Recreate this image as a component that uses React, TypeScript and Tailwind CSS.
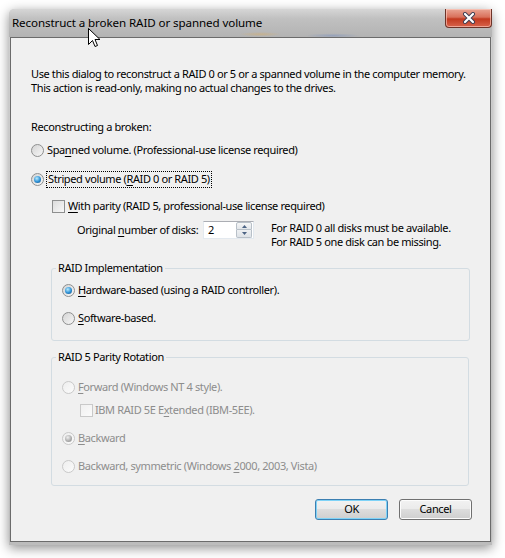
import React from 'react';

const Key = ({ children }: { children: React.ReactNode }) => (
  <span className="underline underline-offset-[2px] decoration-[1px]">{children}</span>
);

const Radio = ({ checked, disabled }: { checked?: boolean; disabled?: boolean }) => (
  <span
    className={`flex h-[13px] w-[13px] shrink-0 items-center justify-center rounded-full border ${
      disabled
        ? 'border-[#c9c9c9] bg-[linear-gradient(135deg,#eeeeee,#fbfbfb)]'
        : 'border-[#8e8f8f] bg-[linear-gradient(135deg,#d4d4d4,#f7f7f7)]'
    }`}
  >
    {checked && (
      <span
        className={`h-[7px] w-[7px] rounded-full ${
          disabled
            ? 'bg-[radial-gradient(circle_at_40%_35%,#f0f0f0,#a9a9a9_60%,#8c8c8c)]'
            : 'bg-[radial-gradient(circle_at_40%_35%,#b9ecff,#2b8fd4_55%,#15497a)]'
        }`}
      />
    )}
  </span>
);

const Check = ({ disabled }: { disabled?: boolean }) => (
  <span
    className={`h-[13px] w-[13px] shrink-0 border ${
      disabled
        ? 'border-[#c9c9c9] bg-[linear-gradient(135deg,#f0f0f0,#fbfbfb)]'
        : 'border-[#8e8f8f] bg-[linear-gradient(135deg,#dcdcdc,#f8f8f8)]'
    }`}
  />
);

const Row = ({ className, children }: { className: string; children: React.ReactNode }) => (
  <div className={`flex h-[16px] items-center whitespace-nowrap ${className}`}>{children}</div>
);

const Group = ({ title, className, children }: { title: string; className: string; children: React.ReactNode }) => (
  <div className={`ml-[40px] flex flex-col rounded-[3px] border border-[#d3dce2] ${className}`}>
    <div className="-mt-[8px] ml-[4px] w-fit bg-[#f0f0f0] px-[2px] leading-[14px] text-black">{title}</div>
    {children}
  </div>
);

const Button = ({ label, primary }: { label: string; primary?: boolean }) => (
  <div
    className={`flex h-[21px] w-[73px] items-center justify-center rounded-[3px] border bg-[linear-gradient(to_bottom,#f2f2f2,#ebebeb_45%,#dddddd_50%,#cfcfcf)] ${
      primary ? 'border-[#3c7fb1] shadow-[inset_0_0_0_1px_#7fd3f7]' : 'border-[#707070] shadow-[inset_0_0_0_1px_#fcfcfc]'
    }`}
  >
    {label}
  </div>
);

export default function App() {
  return (
    <div className="relative h-[558px] w-[505px] overflow-hidden bg-white pl-[9px] pt-[9px] font-['Noto_Sans',sans-serif] text-[11px] tracking-[-0.38px] text-black">
      <div className="flex h-[536px] w-[483px] flex-col rounded-t-[5px] bg-[linear-gradient(to_bottom,#cfcfcf,#bcbcbc)] shadow-[0_3px_12px_rgba(0,0,0,0.45)]">
        {/* title bar */}
        <div className="flex h-[28px] items-start rounded-t-[5px] bg-[radial-gradient(ellipse_at_52%_90%,rgba(230,170,70,0.35),transparent_6%),radial-gradient(ellipse_at_67%_95%,rgba(80,120,200,0.3),transparent_6%),linear-gradient(to_bottom,#d6d6d6,#c0c0c0_35%,#b3b3b3)]">
          <div className="mt-[6px] flex-1 whitespace-nowrap pl-[3px] text-[11.6px] leading-[16px] tracking-[-0.1px] text-black">
            Reconstruct a broken RAID or spanned volume
          </div>
          <div className="flex h-[19px] w-[47px] items-center justify-center rounded-b-[4px] border border-t-0 border-[#6d3328] bg-[linear-gradient(to_bottom,#e9a594,#d9715b_45%,#c2391f_55%,#d8634b)] shadow-[inset_0_0_0_1px_rgba(255,210,200,0.6)]">
            <svg width="14" height="12" viewBox="0 0 14 12">
              <path d="M3 2 L11 10 M11 2 L3 10" stroke="#3d3d52" strokeWidth="4" strokeLinecap="round" />
              <path d="M3 2 L11 10 M11 2 L3 10" stroke="#ffffff" strokeWidth="2.2" strokeLinecap="round" />
            </svg>
          </div>
        </div>

        {/* client area */}
        <div className="mx-[1px] flex flex-1 flex-col border border-[#6b6b6b] bg-[#f0f0f0]">
          <div className="mt-[29px] whitespace-nowrap pl-[20px] leading-[14px]">
            <div>Use this dialog to reconstruct a RAID 0 or 5 or a spanned volume in the computer memory.</div>
            <div>This action is read-only, making no actual changes to the drives.</div>
          </div>

          <div className="mt-[25px] pl-[20px] leading-[14px]">Reconstructing a broken:</div>

          <Row className="mt-[8px] gap-[3px] pl-[20px]">
            <Radio />
            <span>
              Spa<Key>n</Key>ned volume. (Professional-use license required)
            </span>
          </Row>

          <div className="mt-[13px] flex h-[17px] items-center gap-[2px] whitespace-nowrap pl-[20px]">
            <Radio checked />
            <span className="flex h-[17px] items-center border border-dotted border-black px-[1px]">
              Striped volume (<Key>R</Key>AID 0 or RAID 5)
            </span>
          </div>

          <Row className="mt-[10px] gap-[3px] pl-[41px]">
            <Check />
            <span>
              <Key>W</Key>ith parity (RAID 5, professional-use license required)
            </span>
          </Row>

          <div className="mt-[7px] flex items-start whitespace-nowrap pl-[66px]">
            <div className="w-[126px] leading-[18px]">
              Original <Key>n</Key>umber of disks:
            </div>
            <div className="flex h-[18px] w-[51px] items-center border border-[#e3e9ef] border-t-[#abadb3] bg-white">
              <span className="flex-1 pl-[4px] leading-[16px]">2</span>
              <div className="mr-[1px] flex h-[16px] w-[16px] flex-col">
                <div className="flex h-[8px] items-center justify-center rounded-t-[2px] border border-[#b8c0c8] bg-[linear-gradient(to_bottom,#f6f6f6,#e2e6ea)]">
                  <svg width="5" height="3" viewBox="0 0 5 3">
                    <path d="M0 3 L2.5 0 L5 3 Z" fill="#4b6384" />
                  </svg>
                </div>
                <div className="flex h-[8px] items-center justify-center rounded-b-[2px] border border-t-0 border-[#b8c0c8] bg-[linear-gradient(to_bottom,#eef0f2,#dde2e7)]">
                  <svg width="5" height="3" viewBox="0 0 5 3">
                    <path d="M0 0 L2.5 3 L5 0 Z" fill="#4b6384" />
                  </svg>
                </div>
              </div>
            </div>
            <div className="ml-[17px] leading-[14px]">
              <div>For RAID 0 all disks must be available.</div>
              <div>For RAID 5 one disk can be missing.</div>
            </div>
          </div>

          <Group title="RAID Implementation" className="mt-[19px] h-[73px] w-[419px]">
            <Row className="mt-[7px] gap-[3px] pl-[10px]">
              <Radio checked />
              <span>
                <Key>H</Key>ardware-based (using a RAID controller).
              </span>
            </Row>
            <Row className="mt-[12px] gap-[3px] pl-[10px]">
              <Radio />
              <span>
                <Key>S</Key>oftware-based.
              </span>
            </Row>
          </Group>

          <Group title="RAID 5 Parity Rotation" className="mt-[16px] h-[129px] w-[418px]">
            <div className="flex flex-col text-[#8d8d8d]">
              <Row className="mt-[15px] gap-[3px] pl-[10px]">
                <Radio disabled />
                <span>
                  <Key>F</Key>orward (Windows NT 4 style).
                </span>
              </Row>
              <Row className="mt-[7px] gap-[2px] pl-[28px]">
                <Check disabled />
                <span>
                  IBM RAID 5E E<Key>x</Key>tended (IBM-5EE).
                </span>
              </Row>
              <Row className="mt-[12px] gap-[3px] pl-[10px]">
                <Radio checked disabled />
                <span>
                  <Key>B</Key>ackward
                </span>
              </Row>
              <Row className="mt-[12px] gap-[3px] pl-[10px]">
                <Radio disabled />
                <span>
                  Backward, symmetric (Windows <Key>2</Key>000, 2003, Vista)
                </span>
              </Row>
            </div>
          </Group>

          <div className="mt-[13px] flex justify-end gap-[11px] pr-[18px]">
            <Button label="OK" primary />
            <Button label="Cancel" />
          </div>
        </div>
        <div className="h-[3px]" />
      </div>

      {/* mouse pointer over the title bar */}
      <svg className="absolute left-[88px] top-[28px]" width="13" height="21" viewBox="0 0 13 21">
        <path
          d="M0.5 0.5 L0.5 16.5 L4.5 12.5 L7 18.5 L9.5 17.5 L7 11.5 L12 11.5 Z"
          fill="#ffffff"
          stroke="#000000"
          strokeWidth="1"
          strokeLinejoin="miter"
        />
      </svg>
    </div>
  );
}
